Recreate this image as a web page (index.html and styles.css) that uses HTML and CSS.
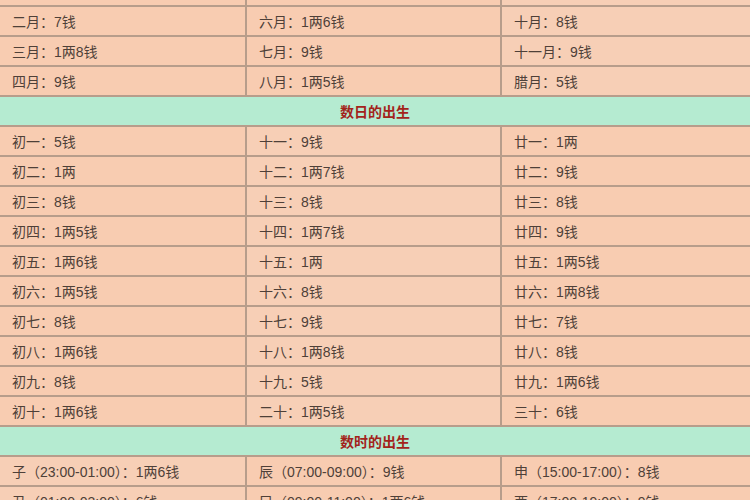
FILE: index.html
```html
<!DOCTYPE html>
<html lang="zh">
<head>
<meta charset="utf-8">
<link rel="stylesheet" href="styles.css">
</head>
<body>
<div class="chart">
  <div class="cell">正月：6钱</div><div class="cell">五月：5钱</div><div class="cell">九月：1两8钱</div>
  <div class="cell">二月：7钱</div><div class="cell">六月：1两6钱</div><div class="cell">十月：8钱</div>
  <div class="cell">三月：1两8钱</div><div class="cell">七月：9钱</div><div class="cell">十一月：9钱</div>
  <div class="cell">四月：9钱</div><div class="cell">八月：1两5钱</div><div class="cell">腊月：5钱</div>
  <div class="head">数日的出生</div>
  <div class="cell">初一：5钱</div><div class="cell">十一：9钱</div><div class="cell">廿一：1两</div>
  <div class="cell">初二：1两</div><div class="cell">十二：1两7钱</div><div class="cell">廿二：9钱</div>
  <div class="cell">初三：8钱</div><div class="cell">十三：8钱</div><div class="cell">廿三：8钱</div>
  <div class="cell">初四：1两5钱</div><div class="cell">十四：1两7钱</div><div class="cell">廿四：9钱</div>
  <div class="cell">初五：1两6钱</div><div class="cell">十五：1两</div><div class="cell">廿五：1两5钱</div>
  <div class="cell">初六：1两5钱</div><div class="cell">十六：8钱</div><div class="cell">廿六：1两8钱</div>
  <div class="cell">初七：8钱</div><div class="cell">十七：9钱</div><div class="cell">廿七：7钱</div>
  <div class="cell">初八：1两6钱</div><div class="cell">十八：1两8钱</div><div class="cell">廿八：8钱</div>
  <div class="cell">初九：8钱</div><div class="cell">十九：5钱</div><div class="cell">廿九：1两6钱</div>
  <div class="cell">初十：1两6钱</div><div class="cell">二十：1两5钱</div><div class="cell">三十：6钱</div>
  <div class="head">数时的出生</div>
  <div class="cell">子（23:00-01:00）：1两6钱</div><div class="cell">辰（07:00-09:00）：9钱</div><div class="cell">申（15:00-17:00）：8钱</div>
  <div class="cell">丑（01:00-03:00）：6钱</div><div class="cell">巳（09:00-11:00）：1两6钱</div><div class="cell">酉（17:00-19:00）：9钱</div>
</div>
</body>
</html>
```
FILE: styles.css
```css
html, body {
  margin: 0;
  padding: 0;
  background: #f7cdb3;
  overflow: hidden;
}
.chart {
  display: grid;
  grid-template-columns: 245px 253px 1fr;
  grid-auto-rows: 28px;
  gap: 2px 2px;
  background: #b79d8b;
  margin-top: -23px;
  font-family: "Liberation Sans", "Noto Sans CJK SC", sans-serif;
  font-size: 14px;
  color: #4e4038;
}
.cell {
  background: #f8ccb1;
  display: flex;
  align-items: center;
  padding-left: 12px;
  white-space: nowrap;
}
.cell:nth-child(3n) {
  background: #f7cfb6;
}
.head {
  grid-column: 1 / -1;
  background: #b5ebd1;
  display: flex;
  align-items: center;
  justify-content: center;
  font-weight: bold;
  color: #a3231b;
  font-family: "Noto Sans CJK SC", sans-serif;
}
```
